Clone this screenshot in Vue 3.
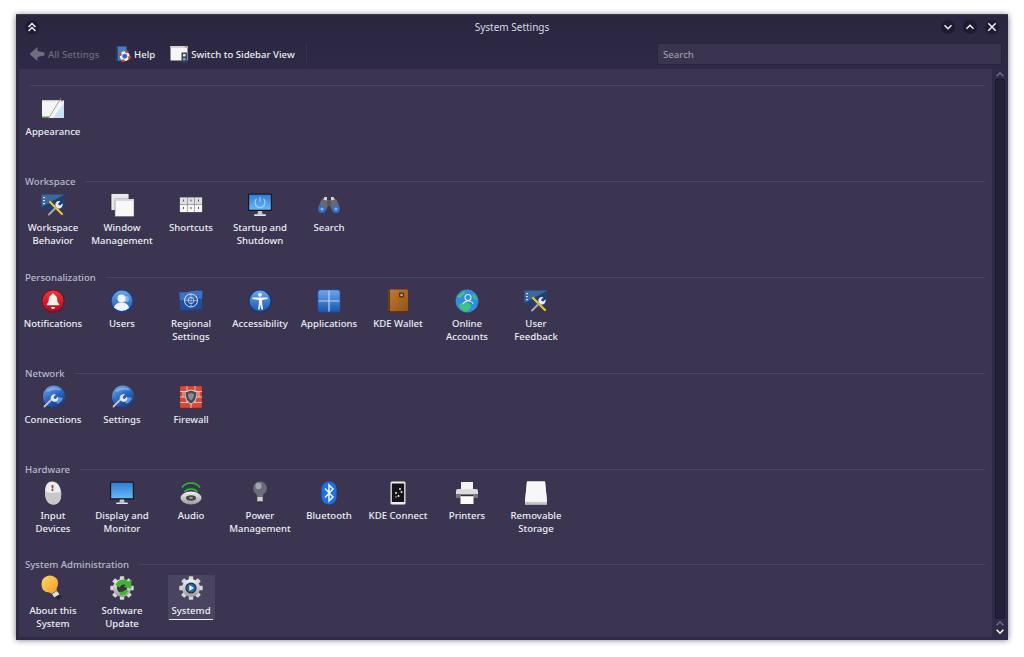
<template>
  <div class="desktop">
    <svg class="defs" aria-hidden="true">
      <defs>
        <linearGradient id="gBlue" x1="0" y1="0" x2="0" y2="1"><stop offset="0" stop-color="#6aa7ec" /><stop offset="1" stop-color="#1d56ad" /></linearGradient>
        <linearGradient id="gRed" x1="0" y1="0" x2="0" y2="1"><stop offset="0" stop-color="#f0343f" /><stop offset="1" stop-color="#a80f1f" /></linearGradient>
        <linearGradient id="gScreen" x1="0" y1="0" x2="0" y2="1"><stop offset="0" stop-color="#2f7fd8" /><stop offset="1" stop-color="#69b7f5" /></linearGradient>
        <linearGradient id="gSteel" x1="0" y1="0" x2="0" y2="1"><stop offset="0" stop-color="#f2f2f2" /><stop offset="1" stop-color="#9a9a9a" /></linearGradient>
        <linearGradient id="gBulb" x1="0" y1="0" x2="1" y2="1"><stop offset="0" stop-color="#ffd868" /><stop offset="1" stop-color="#f09a25" /></linearGradient>
        <linearGradient id="gWallet" x1="0" y1="0" x2="1" y2="1"><stop offset="0" stop-color="#c27a32" /><stop offset="1" stop-color="#8f5216" /></linearGradient>
        <linearGradient id="gGlobe" x1="0" y1="0" x2="0.6" y2="1"><stop offset="0" stop-color="#7fb2ee" /><stop offset="0.55" stop-color="#2c68c4" /><stop offset="1" stop-color="#123f8c" /></linearGradient>
      </defs>
    </svg>

    <div class="window">
      <header class="titlebar">
        <button class="round-btn">
          <svg viewBox="0 0 12 12"><path d="M3 6l3-3 3 3M3 9.5l3-3 3 3" /></svg>
        </button>
        <span class="title">System Settings</span>
        <div class="win-buttons">
          <button class="round-btn">
            <svg viewBox="0 0 12 12"><path d="M3 4.5l3 3 3-3" /></svg>
          </button>
          <button class="round-btn">
            <svg viewBox="0 0 12 12"><path d="M3 7.5l3-3 3 3" /></svg>
          </button>
          <button class="round-btn">
            <svg viewBox="0 0 12 12"><path d="M2.8 2.8l6.4 6.4M9.2 2.8l-6.4 6.4" /></svg>
          </button>
        </div>
      </header>

      <div class="toolbar">
        <div class="tool disabled">
          <svg class="tool-icon back" viewBox="0 0 16 16"><path d="M0.5 8l8-7v4l7 1.5v3l-7 1.5v4z" fill="#6f6d80" /></svg>
          All Settings
        </div>
        <div class="tool help">
          <svg class="tool-icon" viewBox="0 0 18 18">
            <rect x="1" y="0.5" width="12" height="16" fill="#3f7fc4" />
            <rect x="1" y="0.5" width="2" height="16" fill="#1d3550" />
            <circle cx="11" cy="11.5" r="5.5" fill="#f4f4f4" />
            <circle cx="11" cy="11.5" r="5.5" fill="none" stroke="#d8412f" stroke-width="3" stroke-dasharray="3.2 5.4" />
            <circle cx="11" cy="11.5" r="2.8" fill="#2f6fc0" />
          </svg>
          Help
        </div>
        <div class="tool sidebar">
          <svg class="tool-icon wide" viewBox="0 0 18 18">
            <rect x="0.5" y="1" width="17" height="14.5" fill="#f5f5f5" />
            <rect x="0.5" y="1" width="17" height="2" fill="#d5d5d8" />
            <rect x="15" y="1.5" width="2" height="1" fill="#d9534f" />
            <rect x="11.5" y="7.5" width="5.5" height="10" fill="#39455a" />
            <rect x="13" y="9" width="2.6" height="2.4" fill="#e8e8e8" />
            <rect x="13" y="13" width="2.6" height="2.4" fill="#6fa4dc" />
          </svg>
          Switch to Sidebar View
        </div>
        <span class="tool-sep"></span>
        <div class="search">Search</div>
      </div>

      <div class="body">
        <main class="content">
          <section v-for="cat in categories" :key="cat.title" class="category">
            <div class="cat-head">
              <span v-if="cat.title !== '-'" class="cat-title">{{ cat.title }}</span>
              <span class="cat-line"></span>
            </div>
            <div class="items">
              <div v-for="it in cat.items" :key="it.label" class="item" :class="{ active: it.active }">
                <svg class="item-icon" viewBox="0 0 24 24" v-html="icons[it.icon]"></svg>
                <span class="item-label">{{ it.label }}</span>
              </div>
            </div>
          </section>
        </main>

        <aside class="scrollbar">
          <svg class="arrow dim" viewBox="0 0 12 8"><path d="M2 6l4-4 4 4" /></svg>
          <div class="track"></div>
          <svg class="arrow dim" viewBox="0 0 12 8"><path d="M2 6l4-4 4 4" /></svg>
          <svg class="arrow" viewBox="0 0 12 8"><path d="M2 2l4 4 4-4" /></svg>
        </aside>
      </div>
    </div>
  </div>
</template>

<script setup>
const wrench =
  '<path d="M3.5 21.5l7.5-7.5" stroke="#c4c4ca" stroke-width="1.8" stroke-linecap="round" fill="none"/>' +
  '<path d="M10 14.5a3.8 3.8 0 0 1 5-5l-2.4 2.3.4 1.7 1.7.4 2.3-2.4a3.8 3.8 0 0 1-5 5z" fill="#e8e8ec"/>'

const tools =
  '<rect x="0.5" y="1.5" width="23" height="15" fill="#20406e"/><path d="M0.5 1.5h23L0.5 14z" fill="#3a679f"/>' +
  '<rect x="2" y="4" width="2" height="1.2" fill="#cfe0f2"/><rect x="2" y="7" width="2" height="1.2" fill="#cfe0f2"/><rect x="2" y="10" width="2" height="1.2" fill="#cfe0f2"/>' +
  '<path d="M9 9l12 12" stroke="#f2c41d" stroke-width="2.2" stroke-linecap="round"/>' +
  '<path d="M8 21.5l8-8" stroke="#a9a9af" stroke-width="2" stroke-linecap="round"/>' +
  '<path d="M14.5 13a3.8 3.8 0 0 1 5-4.8l-2.3 2.2.4 1.7 1.7.4 2.2-2.3a3.8 3.8 0 0 1-4.8 5z" fill="#ececf0"/>'

const gear = (center) => {
  let teeth = ''
  for (let a = 0; a < 360; a += 45) {
    teeth += `<rect x="9.8" y="0.3" width="4.4" height="5.5" rx="0.6" fill="#d6d6d6" transform="rotate(${a} 12 12)"/>`
  }
  return teeth + '<circle cx="12" cy="12" r="9" fill="url(#gSteel)"/>' + center
}

const icons = {
  appearance:
    '<rect x="1" y="3" width="22" height="18" fill="#f4f4f4"/><rect x="1" y="3" width="22" height="1.2" fill="#c9c9c9"/>' +
    '<rect x="20" y="3" width="2.4" height="1.2" fill="#d9534f"/><path d="M12 21L23 6v15z" fill="#c8e0f4"/>' +
    '<rect x="1" y="19.5" width="7" height="1.5" fill="#4f9a46"/><path d="M7.5 21.5L20 1" stroke="#8f8f99" stroke-width="0.8"/>',
  workspace: tools,
  feedback: tools,
  window:
    '<rect x="1" y="0.5" width="18" height="17" fill="#e8e8e8" stroke="#24242e" stroke-width="0.7"/>' +
    '<rect x="5" y="6" width="19" height="17.5" fill="#f8f8f8" stroke="#5a5a66" stroke-width="0.5"/><rect x="5" y="6" width="19" height="1.8" fill="#cfd5dd"/>',
  shortcuts:
    '<rect x="0.5" y="4" width="23" height="15.5" rx="1" fill="#62626c"/>' +
    '<rect x="1" y="4.5" width="7" height="7" fill="#dedede"/><rect x="8.5" y="4.5" width="7" height="7" fill="#dedede"/><rect x="16" y="4.5" width="7" height="7" fill="#dedede"/>' +
    '<rect x="1" y="12" width="7" height="7" fill="#f7f7f7"/><rect x="8.5" y="12" width="7" height="7" fill="#f7f7f7"/><rect x="16" y="12" width="7" height="7" fill="#f7f7f7"/>' +
    '<path d="M4.5 6.5v2M12 6.5v2M19.5 6.5v2M4.5 14v2M12 14v2M19.5 14v2" stroke="#555" stroke-width="1"/>',
  startup:
    '<rect x="0" y="0.5" width="24" height="17.5" rx="1" fill="#14161d"/><rect x="1.2" y="1.7" width="21.6" height="15" fill="url(#gScreen)"/>' +
    '<path d="M8.4 6a5 5 0 1 0 7.2 0" fill="none" stroke="#a5d4f8" stroke-width="1.1"/><path d="M12 4v5" stroke="#a5d4f8" stroke-width="1.1"/>' +
    '<path d="M10 18h4l.6 3.4H9.4z" fill="#c5c5c5"/><rect x="6" y="21.3" width="12" height="1.7" rx="0.8" fill="#e2e2e2"/>',
  search:
    '<path d="M8.5 7h7v6h-7z" fill="#55575f"/><path d="M1 15l3.5-8.500h5L10.5 14l-2 4H2z" fill="#666872"/><path d="M23 15l-3.5-8.500h-5L13.5 14l2 4H22z" fill="#666872"/>' +
    '<path d="M6 6.500l1.5-2.500h2.500v3.500zM18 6.500l-1.500-2.500h-2.500v3.500z" fill="#d2d2d8"/>' +
    '<circle cx="5" cy="16.500" r="3.600" fill="#2d6fd0"/><circle cx="19" cy="16.500" r="3.600" fill="#2d6fd0"/>' +
    '<circle cx="5" cy="16" r="1.600" fill="#7ab0ee"/><circle cx="19" cy="16" r="1.600" fill="#7ab0ee"/>',
  notifications:
    '<circle cx="12" cy="12" r="11.5" fill="#7d0c1a"/><circle cx="12" cy="12" r="10.5" fill="url(#gRed)"/>' +
    '<path d="M12 4.5a1.6 1.6 0 0 1 1.6 1.5c2.4.8 2.5 3.3 2.8 6 .2 1.6 1.2 2.4 1.8 3.2v1.1H5.8v-1.1c.6-.8 1.6-1.6 1.8-3.2.3-2.7.4-5.2 2.8-6A1.6 1.6 0 0 1 12 4.5z" fill="#f5efe9"/>' +
    '<path d="M10 18h4a2 2 0 0 1-4 0z" fill="#f5efe9"/>',
  users:
    '<circle cx="12" cy="12" r="11.5" fill="#163f86"/><circle cx="12" cy="12" r="10.4" fill="url(#gBlue)"/>' +
    '<circle cx="16" cy="10" r="3" fill="#8fb6e8"/><circle cx="11.5" cy="9.5" r="4" fill="#eef3fa"/>' +
    '<path d="M4 19c.6-4 3.6-4.6 5.6-5.4h3.8c2 .8 5 1.4 5.6 5.4a10.4 10.4 0 0 1-14.4 0z" fill="#eef3fa"/>',
  regional:
    '<path d="M0.5 3c6 2 11-2 23-1l-1 18.500c-7-1.500-15 2.500-21.500 0z" fill="#1d4ea3"/><path d="M0.5 3c6 2 11-2 23-1l-.5 8C15 7 8 13 .8 11z" fill="#3b72c8"/>' +
    '<circle cx="12" cy="11.5" r="6.500" fill="none" stroke="#dfe9f7" stroke-width="1"/><circle cx="12" cy="11.5" r="3" fill="none" stroke="#dfe9f7" stroke-width="0.8"/>' +
    '<path d="M12 5v13M5.500 11.500h13" stroke="#dfe9f7" stroke-width="0.5"/>',
  accessibility:
    '<circle cx="12" cy="12" r="11.5" fill="#0e3a78"/><circle cx="12" cy="12" r="10.4" fill="url(#gBlue)"/>' +
    '<circle cx="12" cy="5.8" r="1.9" fill="#f2f6fb"/><path d="M4.5 8.5h15v1.6l-5.4 1v3.4l1 6h-1.8L12 15l-.3 5.5H9.9l1-6v-3.4l-6.4-1z" fill="#f2f6fb"/>',
  applications:
    '<rect x="0.5" y="0.5" width="23" height="23" rx="3" fill="#1f4fa7"/><rect x="1.3" y="1.3" width="21.4" height="21.4" rx="2.4" fill="url(#gBlue)"/>' +
    '<path d="M12 1.5v21M1.5 12h21" stroke="#bcd5f5" stroke-width="1.2"/>',
  wallet:
    '<rect x="2.5" y="0.5" width="19.5" height="23" rx="1" fill="url(#gWallet)"/><rect x="2.5" y="0.5" width="1.4" height="23" fill="#5c3209"/>' +
    '<rect x="2.5" y="22.4" width="19.5" height="1.1" fill="#3a2208"/><rect x="13" y="3.5" width="5" height="5" rx="1" fill="#5a2f10"/><rect x="14.4" y="4.9" width="2.2" height="2.2" fill="#d5b08a"/>',
  online:
    '<circle cx="12" cy="12" r="11.4" fill="#2f8fdc"/><path d="M2 7c3-1 5-4 7-5 2 2 0 4-2 5-1 2-4 3-5 0zM4 15c4-2 8-2 11 0 2 2 0 6-4 8-3-1-7-4-7-8zM18 5c2 1 4 4 4 6-2 0-5-2-4-6z" fill="#43c27d"/>' +
    '<circle cx="13" cy="8.5" r="3" fill="none" stroke="#d6eaf8" stroke-width="1.1"/><path d="M8 15c1-2 3-3 5-3s5 1 5 3" fill="none" stroke="#d6eaf8" stroke-width="1.1"/>',
  connections:
    '<circle cx="13" cy="11.5" r="11" fill="url(#gGlobe)"/><path d="M5 6c4-4 12-5 15-1-2 1-4-1-7 0-3 0-5 3-8 1zM16 13c2-1 4-1 6 0-1 3-3 5-6 6-1-2-1-4 0-6z" fill="#a8c9f2" opacity=".55"/>' +
    wrench,
  firewall:
    '<rect x="0.5" y="0.5" width="23" height="23" fill="#5b2b28"/><rect x="1.2" y="1.2" width="21.6" height="21.6" fill="#d9473b"/>' +
    '<path d="M1 6.5h22M1 12h22M1 17.5h22M8 1v5.5M16 1v5.5M4 6.5V12M20 6.5V12M8 12v5.5M16 12v5.5M12 17.5V23" stroke="#f1c9bf" stroke-width="0.9"/>' +
    '<path d="M12 5l6 2c0 6-2 10-6 12-4-2-6-6-6-12z" fill="#4a4a50" stroke="#d9d9d9" stroke-width="1"/><path d="M12 8l3 1c0 3-1 5-3 6.5-2-1.5-3-3.5-3-6.5z" fill="#8c8c90"/>',
  input:
    '<path d="M11 0.5c5 0 8 4 9 10 1 8-2 13-7.5 13S4 19 4 11c0-6 2-10.5 7-10.5z" fill="#ececec"/><path d="M12 12c4 0 7-1 8-2 1 8-2 13.5-7.5 13.5S4 18 4 10c1 1 4 2 8 2z" fill="#c8c8c8"/>' +
    '<rect x="10.5" y="4" width="2" height="3" rx="1" fill="#555"/><rect x="10.7" y="7.5" width="1.6" height="2.5" fill="#c22"/>',
  display:
    '<rect x="0" y="0.5" width="24" height="18" rx="1" fill="#14161d"/><rect x="1.2" y="1.7" width="21.6" height="15.5" fill="url(#gScreen)"/>' +
    '<path d="M10 18.5h4l.6 3H9.4z" fill="#c5c5c5"/><rect x="6" y="21.4" width="12" height="1.7" rx="0.8" fill="#e2e2e2"/>',
  audio:
    '<path d="M3 6.5c4-6 14-6 18 0" fill="none" stroke="#27c42c" stroke-width="1.5"/><path d="M5.5 11c3-4 10-4 13 0" fill="none" stroke="#27c42c" stroke-width="1.5"/>' +
    '<ellipse cx="12" cy="17" rx="10.5" ry="6.5" fill="url(#gSteel)"/><ellipse cx="12" cy="17" rx="5" ry="2.8" fill="#45454b"/><ellipse cx="12" cy="16.8" rx="2" ry="1.1" fill="#99999e"/>',
  power:
    '<path d="M12 0.5a6.8 6.8 0 0 1 4 12.3c-.8.7-1 1.7-1 3.2H9c0-1.5-.2-2.5-1-3.2A6.8 6.8 0 0 1 12 .5z" fill="#6b6d78"/><ellipse cx="10.5" cy="5" rx="3" ry="3.3" fill="#a3a5b0"/>' +
    '<rect x="9.3" y="16" width="5.4" height="4.5" fill="#d2d2d2"/><rect x="10.3" y="20.5" width="3.4" height="2.5" fill="#333"/>',
  bluetooth:
    '<rect x="4.5" y="0.5" width="15" height="23" rx="7.5" fill="#1b6fe8"/>' +
    '<path d="M8 7.5l8 8.5-4 4V4l4 4-8 8.5" fill="none" stroke="#f5f8fd" stroke-width="1.5"/>',
  kdeconnect:
    '<rect x="4.5" y="0.5" width="15" height="23" rx="1.5" fill="#efefef"/><rect x="5.8" y="2.5" width="12.4" height="18.5" fill="#14141a"/>' +
    '<circle cx="14" cy="8" r="1" fill="#f0f0f0"/><circle cx="15.5" cy="11" r="1" fill="#f0f0f0"/><circle cx="10" cy="12" r="1" fill="#f0f0f0"/><circle cx="12.5" cy="15" r="1" fill="#f0f0f0"/><circle cx="10" cy="16" r=".7" fill="#f0f0f0"/>',
  printers:
    '<rect x="6" y="1" width="12" height="8" fill="#f4f4f4"/><rect x="1" y="8" width="22" height="9" rx="2" fill="#dcdcdc"/><rect x="1" y="13" width="22" height="4" fill="#77777d"/>' +
    '<rect x="5.5" y="14" width="13" height="9" fill="#fbfbfb"/><rect x="5.5" y="14" width="13" height="1.2" fill="#33333a"/>',
  storage:
    '<path d="M3 0.5h18l2 20v3H1v-3z" fill="#efefef"/><rect x="1" y="21" width="22" height="2.5" fill="#c6c6c6"/><path d="M3 .5h18l2 20H1z" fill="#f7f7f7"/><rect x="3" y="21.8" width="1.5" height="1" fill="#5fbf4f"/>',
  about:
    '<path d="M0.5 8a8.5 8.5 0 0 1 14.5-6c2.700 2.700 2.500 6.500 1.200 9.200-.6 1.300-.6 2.400-.5 3.600l-5.200 3c-1-1-2-1.500-3.500-1.600C2.500 16 .5 12.500 .5 8z" fill="url(#gBulb)"/>' +
    '<path d="M11 18l5-3 2.500 3.500-5 3z" fill="#dedede"/><path d="M13.500 21.500l5-3 2.500 3-4 2.300z" fill="#26262b"/>',
  update: gear(
    '<circle cx="12" cy="12" r="5" fill="#34343c"/><path d="M5.5 9a8 8 0 0 1 13-3.500l2.500-2 .5 9-8-1.500 2.500-2a4 4 0 0 0-6 2.500z" fill="#3fb62e"/><path d="M18.500 15a7.500 7.500 0 0 1-9 4l1-3.500a4 4 0 0 0 4.500-1.500z" fill="#3fb62e"/>'
  ),
  systemd: gear(
    '<circle cx="12" cy="12" r="5.6" fill="#17345f"/><circle cx="12" cy="12" r="4.3" fill="#2a62ac"/><path d="M10.3 9l4.7 3-4.7 3z" fill="#eef3fa"/>'
  ),
}

const categories = [
  { title: '-', items: [{ label: 'Appearance', icon: 'appearance' }] },
  {
    title: 'Workspace',
    items: [
      { label: 'Workspace Behavior', icon: 'workspace' },
      { label: 'Window Management', icon: 'window' },
      { label: 'Shortcuts', icon: 'shortcuts' },
      { label: 'Startup and Shutdown', icon: 'startup' },
      { label: 'Search', icon: 'search' },
    ],
  },
  {
    title: 'Personalization',
    items: [
      { label: 'Notifications', icon: 'notifications' },
      { label: 'Users', icon: 'users' },
      { label: 'Regional Settings', icon: 'regional' },
      { label: 'Accessibility', icon: 'accessibility' },
      { label: 'Applications', icon: 'applications' },
      { label: 'KDE Wallet', icon: 'wallet' },
      { label: 'Online Accounts', icon: 'online' },
      { label: 'User Feedback', icon: 'feedback' },
    ],
  },
  {
    title: 'Network',
    items: [
      { label: 'Connections', icon: 'connections' },
      { label: 'Settings', icon: 'connections' },
      { label: 'Firewall', icon: 'firewall' },
    ],
  },
  {
    title: 'Hardware',
    items: [
      { label: 'Input\nDevices', icon: 'input' },
      { label: 'Display and Monitor', icon: 'display' },
      { label: 'Audio', icon: 'audio' },
      { label: 'Power Management', icon: 'power' },
      { label: 'Bluetooth', icon: 'bluetooth' },
      { label: 'KDE Connect', icon: 'kdeconnect' },
      { label: 'Printers', icon: 'printers' },
      { label: 'Removable Storage', icon: 'storage' },
    ],
  },
  {
    title: 'System Administration',
    items: [
      { label: 'About this System', icon: 'about' },
      { label: 'Software Update', icon: 'update' },
      { label: 'Systemd', icon: 'systemd', active: true },
    ],
  },
]
</script>

<style>
html,
body {
  margin: 0;
  background: #fff;
}
</style>

<style scoped>
.desktop {
  width: 1024px;
  height: 657px;
  box-sizing: border-box;
  padding: 15px 16px 17px;
  background: #fff;
  overflow: hidden;
  font-family: "Noto Sans", sans-serif;
  font-size: 9.6px;
  font-weight: 500;
}
.defs {
  position: absolute;
  width: 0;
  height: 0;
}
.window {
  height: 100%;
  display: flex;
  flex-direction: column;
  background: linear-gradient(#2a2640, #2f2a47 60px);
  box-shadow: 0 0 6px rgba(0, 0, 0, 0.55), 0 -1px 0 #55535f;
}
.titlebar {
  height: 24px;
  display: flex;
  align-items: center;
  justify-content: space-between;
  padding: 0 9px;
  position: relative;
  flex: none;
}
.title {
  position: absolute;
  left: 0;
  right: 0;
  text-align: center;
  color: #d8d9e4;
  font-size: 10px;
  font-weight: 400;
}
.win-buttons {
  display: flex;
  gap: 8px;
}
.round-btn {
  width: 14px;
  height: 14px;
  padding: 0;
  border: none;
  border-radius: 50%;
  background: #1e1b31;
  position: relative;
  z-index: 1;
  display: flex;
}
.round-btn svg {
  width: 14px;
  height: 14px;
  fill: none;
  stroke: #eeeef4;
  stroke-width: 1.3;
}
.toolbar {
  height: 30px;
  display: flex;
  align-items: center;
  padding: 0 6px 0 13px;
  box-sizing: border-box;
  flex: none;
  color: #eceef4;
}
.tool {
  display: flex;
  align-items: center;
  gap: 3px;
  white-space: nowrap;
}
.tool.disabled {
  color: #6e6c80;
  width: 71px;
  gap: 3px;
}
.tool.help {
  margin-left: 15px;
}
.tool.sidebar {
  margin-left: 15px;
}
.tool-icon {
  width: 16px;
  height: 16px;
  flex: none;
}
.tool-icon.wide {
  width: 18px;
  height: 18px;
}
.tool-sep {
  width: 1px;
  height: 22px;
  margin-left: 11px;
  background: #38334f;
}
.search {
  margin-left: auto;
  width: 345px;
  height: 22px;
  box-sizing: border-box;
  padding-left: 5px;
  line-height: 21px;
  background: #3a3450;
  border: 1px solid #282439;
  border-radius: 2px;
  color: #9b9aac;
}
.body {
  flex: 1;
  min-height: 0;
  display: flex;
}
.content {
  flex: none;
  width: 973px;
  margin-left: 3px;
  margin-bottom: 3px;
  box-sizing: border-box;
  padding: 10.9px 7px 0 0;
  background: #3b3551;
  overflow: hidden;
}
.category {
  height: 95.8px;
}
.cat-head {
  height: 12px;
  display: flex;
  align-items: center;
  gap: 5px;
  padding-left: 6px;
  margin-bottom: 5.6px;
}
.cat-title {
  color: #b9bbce;
  white-space: nowrap;
}
.cat-line {
  flex: 1;
  height: 1px;
  background: #4b4564;
  margin-left: 5px;
}
.items {
  display: flex;
  margin-left: -0.5px;
}
.item {
  width: 69px;
  display: flex;
  flex-direction: column;
  align-items: center;
  color: #eceef4;
  text-align: center;
  box-sizing: border-box;
}
.item-icon {
  width: 24px;
  height: 24px;
  flex: none;
  overflow: visible;
}
.item-label {
  margin-top: 4px;
  line-height: 13px;
  padding: 0 1px;
  white-space: pre-line;
}
.item.active {
  width: 47px;
  margin-left: 11px;
  background: #494460;
  height: 45px;
  margin-top: -1px;
  padding-top: 1px;
}
.item.active .item-label {
  border-bottom: 1px solid #eceef4;
  padding: 0 2px 2px;
}
.scrollbar {
  flex: none;
  width: 16px;
  display: flex;
  flex-direction: column;
  align-items: center;
  padding: 2px 0 5px;
  gap: 1px;
  box-sizing: border-box;
}
.track {
  flex: 1;
  width: 8px;
  background: #23203a;
  border: 1px solid #1a1830;
  border-radius: 2px;
}
.arrow {
  width: 10px;
  height: 7px;
  flex: none;
  fill: none;
  stroke: #fff;
  stroke-width: 1.8;
}
.arrow.dim {
  stroke: #6e6c80;
}
</style>
